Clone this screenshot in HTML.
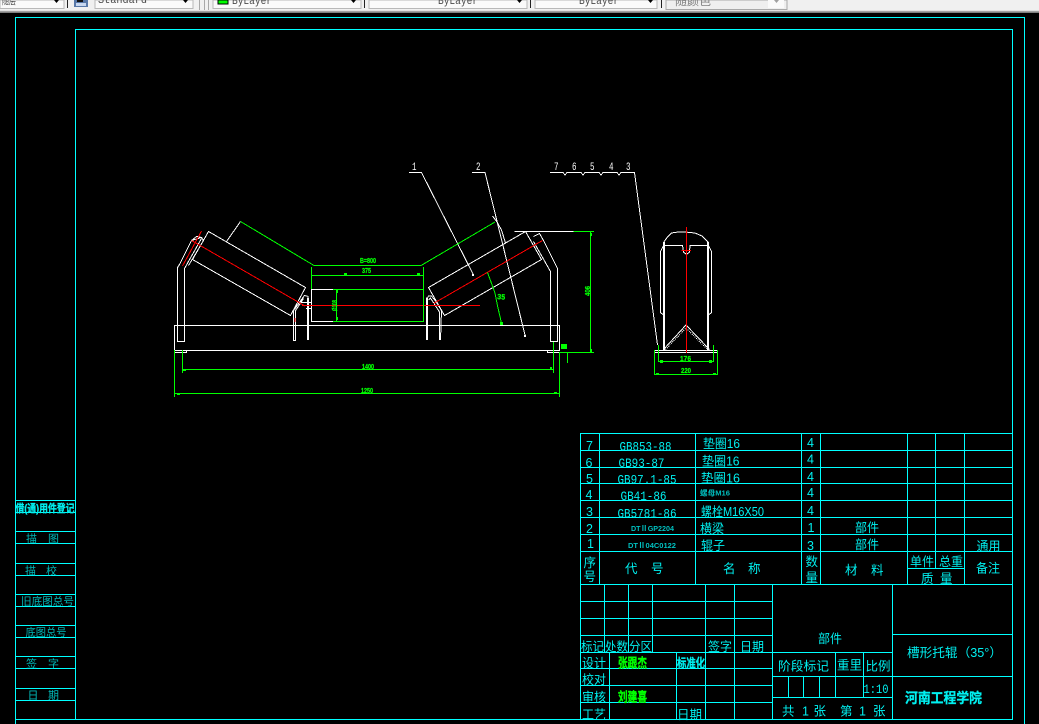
<!DOCTYPE html>
<html><head><meta charset="utf-8"><title>CAD</title>
<style>
html,body{margin:0;padding:0;background:#000;width:1039px;height:724px;overflow:hidden}
svg{display:block;position:absolute;left:0;top:0}
text{font-family:"Liberation Sans","Noto Sans CJK SC",sans-serif}
.g line,.g polyline,.g rect{shape-rendering:crispEdges}
.c{fill:#00f0f0;font-size:12.5px}
.l{fill:#00d8d8;font-size:11px;opacity:.85}
.m{fill:#00f0f0;font-family:"Liberation Mono","Noto Sans CJK SC",monospace;font-size:12.5px}
.s{fill:#00c0c0;font-size:7.5px;font-weight:bold}
.gt{fill:#00ff00;font-size:7.5px;font-weight:bold;stroke:#00ff00;stroke-width:.25}
.gb{fill:#00ff00;font-size:13px;font-weight:bold;stroke:#00ff00;stroke-width:.4}
.w{fill:#fff;font-size:11px;font-family:"Liberation Mono",monospace}
.t{fill:#4a4a4a;font-size:11px;font-family:"Liberation Mono","Noto Sans CJK SC",monospace}
</style></head><body>
<svg width="1039" height="724" viewBox="0 0 1039 724" xmlns="http://www.w3.org/2000/svg">
<rect width="1039" height="724" fill="#000"/>
<!-- toolbar -->
<rect width="1039" height="11" fill="#f0f0f0"/>
<rect y="10" width="1039" height="1" fill="#e0e0e0"/>
<rect y="11" width="1039" height="1" fill="#a0a0a0"/>
<rect y="12" width="1039" height="1" fill="#808080"/>
<g shape-rendering="crispEdges">
<rect x="0" y="0" width="64" height="8.5" fill="#fafafa" stroke="#b8b8b8"/>
<rect x="67" y="0" width="1" height="8" fill="#222"/>
<rect x="74" y="0" width="14" height="7" fill="#5878a8"/>
<rect x="76" y="3" width="10" height="3" fill="#c8d8f0"/>
<rect x="77" y="0" width="6" height="2" fill="#111"/>
<rect x="95" y="0" width="98" height="8.5" fill="#fafafa" stroke="#b8b8b8"/>
<rect x="199" y="0" width="1" height="10" fill="#a8a8a8"/>
<rect x="204" y="0" width="1" height="10" fill="#a8a8a8"/>
<rect x="208" y="0" width="1" height="10" fill="#a8a8a8"/>
<rect x="213" y="0" width="148" height="8.5" fill="#fafafa" stroke="#b8b8b8"/>
<rect x="218" y="0" width="10" height="4" fill="#00ff00" stroke="#000"/>
<rect x="364" y="0" width="1" height="8" fill="#222"/>
<rect x="369" y="0" width="158" height="8.5" fill="#fafafa" stroke="#b8b8b8"/>
<rect x="530" y="0" width="1" height="8" fill="#222"/>
<rect x="535" y="0" width="122" height="8.5" fill="#fafafa" stroke="#b8b8b8"/>
<rect x="661" y="0" width="1" height="8" fill="#222"/>
<rect x="666" y="0" width="121" height="9.5" fill="#efefef" stroke="#a8a8a8"/>
<rect x="768" y="0" width="16" height="8" fill="#fafafa"/>
</g>
<g fill="#000"><path d="M54 0h5l-2.5 3z"/><path d="M183 0h5l-2.5 3z"/><path d="M351 0h5l-2.5 3z"/><path d="M517 0h5l-2.5 3z"/><path d="M648 0h5l-2.5 3z"/></g>
<path d="M774 0h5l-2.5 3z" fill="#a0a0a0"/>
<text class="t" x="2" y="4" textLength="14" lengthAdjust="spacingAndGlyphs">随层</text>
<text class="t" x="98" y="3" textLength="49" lengthAdjust="spacingAndGlyphs">Standard</text>
<text class="t" x="232" y="4" textLength="40" lengthAdjust="spacingAndGlyphs">ByLayer</text>
<text class="t" x="438" y="4" textLength="40" lengthAdjust="spacingAndGlyphs">ByLayer</text>
<text class="t" x="579" y="4" textLength="40" lengthAdjust="spacingAndGlyphs">ByLayer</text>
<text class="t" x="675" y="5" textLength="36" lengthAdjust="spacingAndGlyphs" style="fill:#808080">随颜色</text>

<!-- frames and grid -->
<g class="g" stroke="#00ffff" stroke-width="1" fill="none">
<polyline points="15.5,724 15.5,17.5 1024.5,17.5 1024.5,724"/>
<rect x="75.5" y="29.5" width="937" height="690"/>
<line x1="15" y1="719.5" x2="76" y2="719.5"/>
<line x1="15" y1="500.5" x2="76" y2="500.5"/><line x1="15" y1="512.5" x2="76" y2="512.5"/>
<line x1="15" y1="531.5" x2="76" y2="531.5"/><line x1="15" y1="543.5" x2="76" y2="543.5"/>
<line x1="15" y1="563.5" x2="76" y2="563.5"/><line x1="15" y1="575.5" x2="76" y2="575.5"/>
<line x1="15" y1="594.5" x2="76" y2="594.5"/><line x1="15" y1="606.5" x2="76" y2="606.5"/>
<line x1="15" y1="625.5" x2="76" y2="625.5"/><line x1="15" y1="637.5" x2="76" y2="637.5"/>
<line x1="15" y1="656.5" x2="76" y2="656.5"/><line x1="15" y1="668.5" x2="76" y2="668.5"/>
<line x1="15" y1="688.5" x2="76" y2="688.5"/><line x1="15" y1="700.5" x2="76" y2="700.5"/>
<!-- parts table -->
<line x1="580" y1="433.5" x2="1013" y2="433.5"/>
<line x1="580" y1="450.5" x2="1013" y2="450.5"/>
<line x1="580" y1="467.5" x2="1013" y2="467.5"/>
<line x1="580" y1="483.5" x2="1013" y2="483.5"/>
<line x1="580" y1="500.5" x2="1013" y2="500.5"/>
<line x1="580" y1="517.5" x2="1013" y2="517.5"/>
<line x1="580" y1="534.5" x2="1013" y2="534.5"/>
<line x1="580" y1="551.5" x2="1013" y2="551.5"/>
<line x1="580" y1="584.5" x2="1013" y2="584.5"/>
<line x1="580.5" y1="433" x2="580.5" y2="720"/>
<line x1="599.5" y1="433" x2="599.5" y2="584"/>
<line x1="695.5" y1="433" x2="695.5" y2="584"/>
<line x1="801.5" y1="433" x2="801.5" y2="584"/>
<line x1="820.5" y1="433" x2="820.5" y2="584"/>
<line x1="907.5" y1="433" x2="907.5" y2="584"/>
<line x1="935.5" y1="433" x2="935.5" y2="568"/>
<line x1="964.5" y1="433" x2="964.5" y2="584"/>
<line x1="907" y1="568.5" x2="965" y2="568.5"/>
<!-- title block -->
<line x1="580" y1="601.5" x2="772" y2="601.5"/>
<line x1="580" y1="618.5" x2="772" y2="618.5"/>
<line x1="580" y1="635.5" x2="772" y2="635.5"/>
<line x1="580" y1="652.5" x2="892" y2="652.5"/>
<line x1="580" y1="668.5" x2="772" y2="668.5"/>
<line x1="580" y1="685.5" x2="772" y2="685.5"/>
<line x1="580" y1="702.5" x2="772" y2="702.5"/>
<line x1="604.5" y1="584" x2="604.5" y2="652"/>
<line x1="628.5" y1="584" x2="628.5" y2="652"/>
<line x1="652.5" y1="584" x2="652.5" y2="652"/>
<line x1="609.5" y1="652" x2="609.5" y2="720"/>
<line x1="676.5" y1="652" x2="676.5" y2="720"/>
<line x1="705.5" y1="584" x2="705.5" y2="720"/>
<line x1="734.5" y1="584" x2="734.5" y2="720"/>
<line x1="772.5" y1="584" x2="772.5" y2="720"/>
<line x1="892.5" y1="584" x2="892.5" y2="720"/>
<line x1="892" y1="634.5" x2="1013" y2="634.5"/>
<line x1="772" y1="676.5" x2="1013" y2="676.5"/>
<line x1="772" y1="697.5" x2="892" y2="697.5"/>
<line x1="835.5" y1="652" x2="835.5" y2="698"/>
<line x1="863.5" y1="652" x2="863.5" y2="698"/>
<line x1="788.5" y1="676" x2="788.5" y2="698"/>
<line x1="803.5" y1="676" x2="803.5" y2="698"/>
<line x1="819.5" y1="676" x2="819.5" y2="698"/>
</g>

<!-- drawing: white -->
<g fill="none" stroke="#fff" stroke-width="1" shape-rendering="crispEdges">
<polygon points="208.5,231.5 305.5,287.5 290.5,315.5 192.5,259.5"/>
<polygon points="525.5,231.5 541.5,259.5 444.5,315.5 428.5,287.5"/>
<polyline points="240.5,221.5 226.5,241.5"/>
<polyline points="514.5,231.5 573.5,231.5"/>
<polyline points="333.5,289.5 311.5,289.5 311.5,321.5 333.5,321.5"/>
<line x1="174" y1="325.5" x2="560" y2="325.5"/>
<line x1="174" y1="350.5" x2="560" y2="350.5"/>
<polyline points="174.5,350.5 174.5,325.5"/>
<polyline points="559.5,350.5 559.5,325.5"/>
<polyline points="174.5,352.5 186.5,352.5 186.5,350.5"/>
<polyline points="547.5,350.5 547.5,352.5 560,352.5"/>
<polyline points="201.5,237.5 191.5,240.5 179.5,264.5 177.5,267.5 177.5,341.5 184.5,341.5 184.5,268.5 201.5,238.5"/>
<polyline points="191.5,240.5 196.5,236.5 201.5,237.5 203.5,240.5 188.5,265.5"/>
<polyline points="533.5,236.5 539.5,233.5 543.5,240.5 557.5,268.5 557.5,341.5 550.5,341.5 550.5,271.5 533.5,241.5"/>
<polyline points="293.5,340.5 293.5,310.5 304.5,295.5 308.5,296.5"/>
<polyline points="295.5,340.5 295.5,310.5 303.5,298.5"/>
<polyline points="296,340.5 293,340.5"/>
<polyline points="307.5,340 307.5,297.5"/><polyline points="308.5,340 308.5,297.5"/>
<polyline points="301.5,302.5 311.5,302.5 311.5,308.5 306,308.5"/>
<polyline points="426.5,340 426.5,297.5"/><polyline points="427.5,340 427.5,297.5"/>
<polyline points="426.5,300 428.5,296 431.5,296 435.5,301 441.5,310.5 440.5,340"/>
<polyline points="428.5,300 430.5,298 439.5,312 439.5,340"/>
<!-- leaders -->
<polyline points="409,172.5 421.5,172.5 473,274"/>
<rect x="472" y="274" width="2" height="2" fill="#fff" stroke="none"/>
<polyline points="472,172.5 485,172.5 525,335"/>
<rect x="524" y="335" width="2" height="2" fill="#fff" stroke="none"/>
<polyline points="492.5,216 497,222 501.5,230 505.5,243"/>
<polyline points="550,172.5 563,172.5 565,175 567,172.5 581,172.5 583,175 585,172.5 599,172.5 601,175 603,172.5 617,172.5 619,175 621,172.5 634.5,172.5 657.5,345"/>
<!-- side view -->
<line x1="663.5" y1="242" x2="663.5" y2="350"/><line x1="664.5" y1="242" x2="664.5" y2="350"/>
<line x1="707.5" y1="242" x2="707.5" y2="350"/><line x1="708.5" y1="242" x2="708.5" y2="350"/>
<polyline points="663.5,242.5 667.5,237 671.5,233 678,232 685,232 695,233 702,236 708.5,242.5"/>
<polyline points="664,245.5 682.5,245.5 683.5,252 686.5,254.5 689.5,252 690,245.5 708,245.5"/>
<polyline points="663.5,245.5 660.5,251.5 660.5,312.5 663.5,315"/>
<polyline points="708.5,245.5 711.5,251.5 711.5,312.5 708.5,315"/>
<line x1="654" y1="350.5" x2="718" y2="350.5"/>
<line x1="654" y1="352.5" x2="718" y2="352.5"/>
<polyline points="663.5,349.5 686,325 709.5,349.5"/>
<polyline points="665.5,349.5 686,328 707.5,349.5" stroke-dasharray="1 1"/>
</g>

<!-- drawing: red -->
<g fill="none" stroke="#ff0000" stroke-width="1" shape-rendering="crispEdges">
<line x1="191.5" y1="240.5" x2="305" y2="306"/>
<line x1="201.5" y1="231" x2="182.5" y2="266"/>
<line x1="433.5" y1="303.5" x2="542.5" y2="240.5"/>
<line x1="302" y1="305.5" x2="480" y2="305.5"/>
<line x1="686.5" y1="227" x2="686.5" y2="353"/>
<line x1="681.5" y1="250.5" x2="691" y2="250.5"/>
<line x1="295" y1="318" x2="295" y2="322"/>
</g>

<!-- drawing: green -->
<g fill="none" stroke="#00ff00" stroke-width="1" shape-rendering="crispEdges">
<polyline points="240.5,221.5 314,265.5 421,265.5 495,222"/>
<line x1="311.5" y1="275.5" x2="423.5" y2="275.5"/>
<line x1="311.5" y1="267" x2="311.5" y2="289"/>
<line x1="423.5" y1="267" x2="423.5" y2="322"/>
<line x1="333" y1="289.5" x2="424" y2="289.5"/>
<line x1="333" y1="321.5" x2="424" y2="321.5"/>
<line x1="336.5" y1="289" x2="336.5" y2="322"/>
<line x1="182" y1="369.5" x2="553.5" y2="369.5"/>
<line x1="182.5" y1="350" x2="182.5" y2="373"/>
<line x1="553.5" y1="342" x2="553.5" y2="373"/>
<line x1="174" y1="393.5" x2="559.5" y2="393.5"/>
<line x1="174.5" y1="350" x2="174.5" y2="397"/>
<line x1="559.5" y1="352" x2="559.5" y2="397"/>
<polyline points="573.5,231.5 594,231.5"/>
<line x1="590.5" y1="231" x2="590.5" y2="352"/>
<line x1="559" y1="352.5" x2="594" y2="352.5"/>
<line x1="567.5" y1="352" x2="567.5" y2="363"/>
<polyline points="487.5,272.5 491,282 495,293 498,308 501.5,323"/>
<polyline points="658.5,345 658.5,361.5 713.5,361.5 713.5,345"/>
<polyline points="654.5,350 654.5,374.5 717.5,374.5 717.5,350"/>
</g>
<g fill="#00ff00">
<rect x="561" y="344" width="6" height="5"/>
<rect x="500" y="322" width="3" height="3"/>
<rect x="344" y="273" width="3" height="2"/><rect x="417" y="273" width="3" height="2"/>
<rect x="183" y="369" width="3" height="2"/><rect x="550" y="367" width="2" height="2"/>
<rect x="177" y="393" width="3" height="2"/><rect x="554" y="392" width="3" height="2"/>
<rect x="590" y="233" width="2" height="3"/><rect x="590" y="349" width="2" height="3"/>
<rect x="336" y="290" width="2" height="3"/><rect x="336" y="317" width="2" height="3"/>
<rect x="660" y="360" width="3" height="3"/><rect x="709" y="360" width="3" height="3"/>
<rect x="656" y="373" width="3" height="2"/><rect x="713" y="373" width="3" height="2"/>
</g>
<g>
<text class="gt" x="360" y="263" textLength="16" lengthAdjust="spacingAndGlyphs">B=800</text>
<text class="gt" x="362" y="273" textLength="9" lengthAdjust="spacingAndGlyphs">375</text>
<text class="gt" x="362" y="369" textLength="12" lengthAdjust="spacingAndGlyphs">1400</text>
<text class="gt" x="361" y="393" textLength="12" lengthAdjust="spacingAndGlyphs">1250</text>
<text class="gt" x="680" y="361" textLength="11" lengthAdjust="spacingAndGlyphs">176</text>
<text class="gt" x="681" y="373" textLength="10" lengthAdjust="spacingAndGlyphs">220</text>
<text class="gt" x="0" y="0" transform="translate(337,311) rotate(-90)" textLength="11" lengthAdjust="spacingAndGlyphs">Ø108</text>
<text class="gt" x="0" y="0" transform="translate(590,296) rotate(-90)" textLength="10" lengthAdjust="spacingAndGlyphs">406</text>
<text class="gt" x="0" y="0" transform="translate(497,299) rotate(5)" textLength="8" lengthAdjust="spacingAndGlyphs">35</text>
<text class="w" x="412" y="170" textLength="4.5" lengthAdjust="spacingAndGlyphs">1</text><text class="w" x="476" y="170" textLength="4.5" lengthAdjust="spacingAndGlyphs">2</text>
<text class="w" x="554" y="170" textLength="4.5" lengthAdjust="spacingAndGlyphs">7</text><text class="w" x="572" y="170" textLength="4.5" lengthAdjust="spacingAndGlyphs">6</text><text class="w" x="590" y="170" textLength="4.5" lengthAdjust="spacingAndGlyphs">5</text><text class="w" x="609" y="170" textLength="4.5" lengthAdjust="spacingAndGlyphs">4</text><text class="w" x="626" y="170" textLength="4.5" lengthAdjust="spacingAndGlyphs">3</text>
</g>

<!-- parts table text -->
<g>
<text class="c" x="586" y="450">7</text><text class="c" x="585.5" y="467">6</text><text class="c" x="586" y="483">5</text><text class="c" x="585.5" y="499">4</text><text class="c" x="586" y="516">3</text><text class="c" x="586" y="533">2</text><text class="c" x="587" y="548">1</text>
<text class="m" x="619.5" y="450.5" textLength="52" lengthAdjust="spacingAndGlyphs">GB853-88</text>
<text class="m" x="618.5" y="467" textLength="46" lengthAdjust="spacingAndGlyphs">GB93-87</text>
<text class="m" x="617.5" y="483.5" textLength="59" lengthAdjust="spacingAndGlyphs">GB97.1-85</text>
<text class="m" x="620.5" y="500" textLength="46" lengthAdjust="spacingAndGlyphs">GB41-86</text>
<text class="m" x="617.5" y="517.5" textLength="59" lengthAdjust="spacingAndGlyphs">GB5781-86</text>
<text class="s" x="631" y="531" textLength="43" lengthAdjust="spacingAndGlyphs">DTⅡGP2204</text>
<text class="s" x="628" y="548" textLength="48" lengthAdjust="spacingAndGlyphs">DTⅡ04C0122</text>
<text class="c" x="703" y="448" textLength="37" lengthAdjust="spacingAndGlyphs">垫圈16</text>
<text class="c" x="702" y="465.5" textLength="37.5" lengthAdjust="spacingAndGlyphs">垫圈16</text>
<text class="c" x="701" y="482.5" textLength="39" lengthAdjust="spacingAndGlyphs">垫圈16</text>
<text class="s" x="700" y="495.5" textLength="30" lengthAdjust="spacingAndGlyphs">螺母M16</text>
<text class="c" x="701" y="516" textLength="63" lengthAdjust="spacingAndGlyphs">螺栓M16X50</text>
<text class="c" x="700" y="533" textLength="24" lengthAdjust="spacingAndGlyphs">横梁</text>
<text class="c" x="701" y="550" textLength="24" lengthAdjust="spacingAndGlyphs">辊子</text>
<text class="c" x="807" y="447">4</text><text class="c" x="807" y="463.5">4</text><text class="c" x="807" y="481">4</text><text class="c" x="807" y="497">4</text><text class="c" x="807" y="515">4</text><text class="c" x="807.5" y="532">1</text><text class="c" x="807" y="550">3</text>
<text class="c" x="855" y="532" textLength="24" lengthAdjust="spacingAndGlyphs">部件</text>
<text class="c" x="855" y="549" textLength="24" lengthAdjust="spacingAndGlyphs">部件</text>
<text class="c" x="976.5" y="550.5" textLength="24" lengthAdjust="spacingAndGlyphs">通用</text>
<text class="c" x="583.5" y="567">序</text><text class="c" x="583.5" y="581">号</text>
<text class="c" x="625" y="573">代</text><text class="c" x="651" y="573">号</text>
<text class="c" x="723" y="573">名</text><text class="c" x="748" y="573">称</text>
<text class="c" x="805.5" y="566">数</text><text class="c" x="805.5" y="582">量</text>
<text class="c" x="845" y="574.5">材</text><text class="c" x="871" y="574.5">料</text>
<text class="c" x="910" y="566" textLength="24" lengthAdjust="spacingAndGlyphs">单件</text>
<text class="c" x="939" y="566" textLength="24" lengthAdjust="spacingAndGlyphs">总重</text>
<text class="c" x="921" y="583">质</text><text class="c" x="940" y="583">量</text>
<text class="c" x="976" y="572.5" textLength="24" lengthAdjust="spacingAndGlyphs">备注</text>
</g>

<!-- title block text -->
<g>
<text class="c" x="581" y="651" textLength="23" lengthAdjust="spacingAndGlyphs">标记</text>
<text class="c" x="605" y="651" textLength="23" lengthAdjust="spacingAndGlyphs">处数</text>
<text class="c" x="629" y="651" textLength="23" lengthAdjust="spacingAndGlyphs">分区</text>
<text class="c" x="708" y="651" textLength="24" lengthAdjust="spacingAndGlyphs">签字</text>
<text class="c" x="740" y="651" textLength="24" lengthAdjust="spacingAndGlyphs">日期</text>
<text class="c" x="582" y="667.5" textLength="24" lengthAdjust="spacingAndGlyphs">设计</text>
<text class="c" x="582" y="684" textLength="24" lengthAdjust="spacingAndGlyphs">校对</text>
<text class="c" x="582" y="701.5" textLength="24" lengthAdjust="spacingAndGlyphs">审核</text>
<text class="c" x="582" y="719" textLength="24" lengthAdjust="spacingAndGlyphs">工艺</text>
<text class="gb" x="618" y="667.5" textLength="29" lengthAdjust="spacingAndGlyphs">张跟杰</text>
<text class="gb" x="618" y="701.5" textLength="29" lengthAdjust="spacingAndGlyphs">刘建喜</text>
<text class="c" x="677" y="667.5" textLength="28" lengthAdjust="spacingAndGlyphs" font-weight="bold" stroke="#00f0f0" stroke-width=".3">标准化</text>
<text class="c" x="677" y="719" textLength="25" lengthAdjust="spacingAndGlyphs">日期</text>
<text class="c" x="818" y="643" textLength="24" lengthAdjust="spacingAndGlyphs">部件</text>
<text class="c" x="778" y="670.5" textLength="51" lengthAdjust="spacingAndGlyphs">阶段标记</text>
<text class="c" x="837" y="669.5" textLength="25" lengthAdjust="spacingAndGlyphs">重里</text>
<text class="c" x="865.5" y="670.5" textLength="25" lengthAdjust="spacingAndGlyphs">比例</text>
<text class="m" x="863.5" y="693" textLength="25" lengthAdjust="spacingAndGlyphs">1:10</text>
<text class="c" x="782" y="715.5">共</text><text class="c" x="802" y="715.5">1</text><text class="c" x="813.5" y="715.5">张</text>
<text class="c" x="840" y="715.5">第</text><text class="c" x="859" y="715.5">1</text><text class="c" x="873" y="715.5">张</text>
<text class="c" x="907" y="657" textLength="95" lengthAdjust="spacingAndGlyphs">槽形托辊（35°）</text>
<text class="c" x="905" y="703" textLength="77" lengthAdjust="spacingAndGlyphs" font-weight="bold" stroke="#00f0f0" stroke-width=".3" style="font-size:14px">河南工程学院</text>
</g>

<!-- left strip text -->
<g>
<text class="c" x="15.5" y="512" textLength="59" lengthAdjust="spacingAndGlyphs" font-weight="bold" stroke="#00f0f0" stroke-width=".3" style="font-size:11px">借(通)用件登记</text>
<text class="l" x="26" y="542.5">描</text><text class="l" x="48" y="542.5">图</text>
<text class="l" x="25" y="574.5">描</text><text class="l" x="46" y="574.5">校</text>
<text class="l" x="21" y="605" textLength="53" lengthAdjust="spacingAndGlyphs">旧底图总号</text>
<text class="l" x="25.5" y="636" textLength="41" lengthAdjust="spacingAndGlyphs">底图总号</text>
<text class="l" x="26" y="667.5">签</text><text class="l" x="48" y="667.5">字</text>
<text class="l" x="27.5" y="699">日</text><text class="l" x="48" y="699">期</text>
</g>
</svg>
</body></html>
